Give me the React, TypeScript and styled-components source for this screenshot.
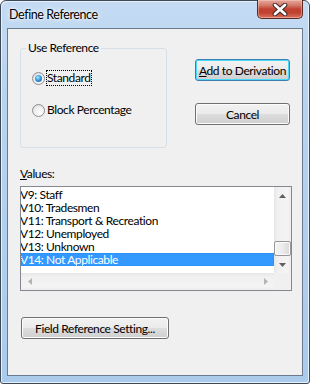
import React from "react";
import styled, { createGlobalStyle } from "styled-components";

const GlobalStyle = createGlobalStyle`
  html, body {
    margin: 0;
    padding: 0;
    background: #ffffff;
  }
  body {
    font-family: Lato, "Noto Sans", sans-serif;
    font-size: 12px;
    letter-spacing: -0.4px;
    color: #000000;
  }
`;

const values = [
    "V9: Staff",
    "V10: Tradesmen",
    "V11: Transport & Recreation",
    "V12: Unemployed",
    "V13: Unknown",
    "V14: Not Applicable",
];

const Arrow: React.FC<{ dir: "up" | "down" | "left" | "right"; disabled?: boolean }> = ({ dir, disabled }) => {
    const color = disabled ? "#b4b4b4" : "#606060";
    const points = {
        up: "0,4 7,4 3.5,0",
        down: "0,0 7,0 3.5,4",
        left: "4,0 4,7 0,3.5",
        right: "0,0 0,7 4,3.5",
    }[dir];
    const vertical = dir === "up" || dir === "down";
    return (
        <svg width={vertical ? 7 : 4} height={vertical ? 4 : 7} viewBox={vertical ? "0 0 7 4" : "0 0 4 7"}>
            <polygon points={points} fill={color} />
        </svg>
    );
};

const App: React.FC = () => {
    return (
        <>
            <GlobalStyle />
            <Window>
                <TitleBar>
                    <Title>Define Reference</Title>
                    <CloseButton>
                        <svg width="16" height="13" viewBox="0 0 16 13">
                            <path
                                d="M3 2 L13 11 M13 2 L3 11"
                                stroke="#3b2323"
                                strokeWidth="4.6"
                                strokeLinecap="round"
                                fill="none"
                            />
                            <path
                                d="M3 2 L13 11 M13 2 L3 11"
                                stroke="#ffffff"
                                strokeWidth="2.8"
                                strokeLinecap="round"
                                fill="none"
                            />
                        </svg>
                    </CloseButton>
                </TitleBar>

                <Client>
                    <TopRow>
                        <GroupBox>
                            <Legend>Use Reference</Legend>
                            <RadioRow>
                                <RadioCircle $checked />
                                <RadioLabel $focused>Standard</RadioLabel>
                            </RadioRow>
                            <RadioRow>
                                <RadioCircle />
                                <RadioLabel>Block Percentage</RadioLabel>
                            </RadioRow>
                        </GroupBox>

                        <ButtonColumn>
                            <PushButton $default>
                                <span>
                                    <u>A</u>dd to Derivation
                                </span>
                            </PushButton>
                            <PushButton>
                                <span>Cancel</span>
                            </PushButton>
                        </ButtonColumn>
                    </TopRow>

                    <FieldLabel>
                        <u>V</u>alues:
                    </FieldLabel>

                    <ListBox>
                        <Items>
                            {values.map((v, i) => (
                                <Item key={v} $selected={i === values.length - 1}>
                                    {v}
                                </Item>
                            ))}
                        </Items>
                        <VScroll>
                            <ArrowButton>
                                <Arrow dir="up" />
                            </ArrowButton>
                            <VTrack />
                            <VThumb />
                            <ArrowButton>
                                <Arrow dir="down" />
                            </ArrowButton>
                        </VScroll>
                        <HScroll>
                            <ArrowButton>
                                <Arrow dir="left" disabled />
                            </ArrowButton>
                            <HTrack />
                            <ArrowButton>
                                <Arrow dir="right" disabled />
                            </ArrowButton>
                        </HScroll>
                        <Corner />
                    </ListBox>

                    <PushButton $wide>
                        <span>Field Reference Setting...</span>
                    </PushButton>
                </Client>
            </Window>
        </>
    );
};

const Window = styled.div`
  box-sizing: border-box;
  width: 310px;
  height: 384px;
  display: flex;
  flex-direction: column;
  padding: 0 6px 7px 6px;
  border: 1px solid #3e4957;
  border-radius: 6px 6px 3px 3px;
  background: linear-gradient(180deg, #c4dbf3 0%, #b9d4f0 20%, #b1cfee 60%, #abcbec 100%);
  box-shadow: inset 1px 1px 0 #e6f0fa, inset -1px -1px 0 #e6f0fa;
`;

const TitleBar = styled.div`
  height: 27px;
  display: flex;
  justify-content: space-between;
  align-items: center;
  flex-shrink: 0;
`;

const Title = styled.div`
  padding-left: 2px;
  font-size: 12.5px;
  line-height: 14px;
  color: #000000;
  text-shadow: 0 0 6px #ffffff, 0 0 3px #ffffff;
`;

const CloseButton = styled.div`
  align-self: flex-start;
  box-sizing: border-box;
  width: 46px;
  height: 19px;
  margin-top: -1px;
  display: flex;
  align-items: center;
  justify-content: center;
  border: 1px solid #5b2a26;
  border-top: none;
  border-radius: 0 0 5px 5px;
  background: linear-gradient(180deg, #e5a99d 0%, #d2796a 30%, #c34232 50%, #c0402f 70%, #d9735f 100%);
  box-shadow: inset 0 0 0 1px rgba(255, 210, 200, 0.45);
`;

const Client = styled.div`
  box-sizing: border-box;
  flex: 1;
  display: flex;
  flex-direction: column;
  padding: 12px 12px 0 12px;
  border: 1px solid #6b7a8c;
  background: #f0f0f0;
`;

const TopRow = styled.div`
  display: flex;
  align-items: flex-start;
`;

const GroupBox = styled.fieldset`
  box-sizing: border-box;
  width: 148px;
  height: 107px;
  margin: 0;
  padding: 15px 0 0 0;
  border: 1px solid #d5dfe5;
  border-radius: 3px;
  min-inline-size: 0;
  display: flex;
  flex-direction: column;
  gap: 16px;
`;

const Legend = styled.legend`
  margin-left: 5px;
  padding: 0 2px;
  line-height: 14px;
  font-size: 12px;
`;

const RadioRow = styled.div`
  display: flex;
  align-items: center;
  height: 16px;
  padding-left: 11px;
`;

const RadioCircle = styled.span<{ $checked?: boolean }>`
  position: relative;
  box-sizing: border-box;
  width: 13px;
  height: 13px;
  border-radius: 50%;
  border: 1px solid #8c8f93;
  background: radial-gradient(circle at 65% 70%, #ffffff 0%, #f1f1f1 45%, #d6d6d6 100%);
  flex-shrink: 0;

  &::after {
    content: "";
    display: ${(p) => (p.$checked ? "block" : "none")};
    position: absolute;
    left: 2px;
    top: 2px;
    width: 7px;
    height: 7px;
    border-radius: 50%;
    background: radial-gradient(circle at 40% 35%, #aee6ff 0%, #3a9be0 45%, #1b4f8f 100%);
  }
`;

const RadioLabel = styled.span<{ $focused?: boolean }>`
  margin-left: 1px;
  line-height: 14px;
  border: 1px dotted ${(p) => (p.$focused ? "#000000" : "transparent")};
`;

const ButtonColumn = styled.div`
  display: flex;
  flex-direction: column;
  gap: 22px;
  margin-left: 28px;
  padding-top: 18px;
`;

const PushButton = styled.div<{ $default?: boolean; $wide?: boolean }>`
  box-sizing: border-box;
  width: ${(p) => (p.$wide ? "148px" : "95px")};
  height: 22px;
  display: flex;
  align-items: center;
  justify-content: center;
  font-size: 12px;
  white-space: nowrap;
  border-radius: 3px;
  border: 1px solid ${(p) => (p.$default ? "#3c7fb1" : "#707070")};
  background: linear-gradient(180deg, #f2f2f2 0%, #ebebeb 48%, #dddddd 52%, #cfcfcf 100%);
  box-shadow: ${(p) => (p.$default ? "inset 0 0 0 1px #48d8fb" : "inset 0 0 0 1px #fcfcfc")};
  margin-left: ${(p) => (p.$wide ? "1px" : "0")};
  margin-top: ${(p) => (p.$wide ? "26px" : "0")};
`;

const FieldLabel = styled.div`
  margin-top: 19px;
  line-height: 14px;
`;

const ListBox = styled.div`
  box-sizing: border-box;
  width: 272px;
  height: 105px;
  margin-top: 5px;
  border: 1px solid #828790;
  background: #ffffff;
  display: grid;
  grid-template-columns: 1fr 17px;
  grid-template-rows: 1fr 17px;
`;

const Items = styled.div`
  padding-top: 1px;
  overflow: hidden;
`;

const Item = styled.div<{ $selected?: boolean }>`
  height: 13px;
  line-height: 13px;
  text-indent: -1px;
  white-space: nowrap;
  color: ${(p) => (p.$selected ? "#ffffff" : "#000000")};
  background: ${(p) => (p.$selected ? "#3399ff" : "transparent")};
  outline: ${(p) => (p.$selected ? "1px dotted #cc6600" : "none")};
  outline-offset: -1px;
`;

const VScroll = styled.div`
  display: flex;
  flex-direction: column;
  background: linear-gradient(90deg, #e6e6e6 0%, #f0f0f0 20%, #f4f4f4 80%, #ececec 100%);
`;

const HScroll = styled.div`
  display: flex;
  background: linear-gradient(180deg, #e6e6e6 0%, #f0f0f0 20%, #f4f4f4 80%, #ececec 100%);
`;

const ArrowButton = styled.div`
  width: 17px;
  height: 17px;
  flex-shrink: 0;
  display: flex;
  align-items: center;
  justify-content: center;
`;

const VTrack = styled.div`
  flex: 1;
`;

const HTrack = styled.div`
  flex: 1;
`;

const VThumb = styled.div`
  box-sizing: border-box;
  height: 15px;
  border: 1px solid #979797;
  border-radius: 2px;
  background: linear-gradient(90deg, #f4f4f4 0%, #ececec 50%, #d8d8d8 100%);
  box-shadow: inset 0 0 0 1px #fbfbfb;
`;

const Corner = styled.div`
  background: #f0f0f0;
`;

export default App;
